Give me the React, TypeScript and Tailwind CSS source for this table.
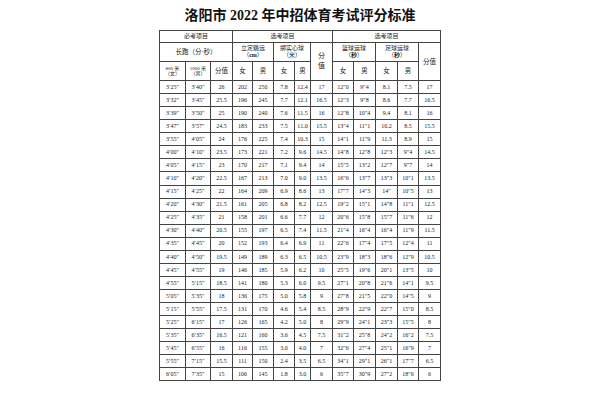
const widths = [26, 25, 22, 20, 21, 21, 16, 22, 21, 22, 22, 21, 22];

const rows: string[][] = [
  ["3′25″", "3′40″", "26", "202", "250", "7.8", "12.4", "17", "12″0", "9″4", "8.1", "7.5", "17"],
  ["3′32″", "3′45″", "25.5", "196", "245", "7.7", "12.1", "16.5", "12″3", "9″8", "8.6", "7.7", "16.5"],
  ["3′39″", "3′50″", "25", "190", "240", "7.6", "11.5", "16", "12″8", "10″4", "9.4", "8.1", "16"],
  ["3′47″", "3′57″", "24.5", "183", "233", "7.5", "11.0", "15.5", "13″4", "11″1", "10.2", "8.5", "15.5"],
  ["3′55″", "4′05″", "24", "176", "225", "7.4", "10.3", "15", "14″1", "11″9", "11.3", "8.9", "15"],
  ["4′00″", "4′10″", "23.5", "173", "221", "7.2", "9.6", "14.5", "14″8", "12″8", "12″3", "9″4", "14.5"],
  ["4′05″", "4′15″", "23", "170", "217", "7.1", "9.4", "14", "15″5", "13″2", "12″7", "9″7", "14"],
  ["4′10″", "4′20″", "22.5", "167", "213", "7.0", "9.0", "13.5", "16″6", "13″7", "13″3", "10″1", "13.5"],
  ["4′15″", "4′25″", "22", "164", "209", "6.9", "8.6", "13", "17″7", "14″3", "14″", "10″5", "13"],
  ["4′20″", "4′30″", "21.5", "161", "205", "6.8", "8.2", "12.5", "19″2", "15″1", "14″8", "11″1", "12.5"],
  ["4′25″", "4′35″", "21", "158", "201", "6.6", "7.7", "12", "20″6", "15″8", "15″7", "11″6", "12"],
  ["4′30″", "4′40″", "20.5", "155", "197", "6.5", "7.4", "11.5", "21″4", "16″4", "16″4", "11″9", "11.5"],
  ["4′35″", "4′45″", "20", "152", "193", "6.4", "6.9", "11", "22″6", "17″4", "17″5", "12″4", "11"],
  ["4′40″", "4′50″", "19.5", "149", "189", "6.3", "6.5", "10.5", "23″9", "18″3", "18″6", "12″9", "10.5"],
  ["4′45″", "4′55″", "19", "146", "185", "5.9", "6.2", "10", "25″5", "19″6", "20″1", "13″5", "10"],
  ["4′55″", "5′15″", "18.5", "141", "180", "5.3", "6.0", "9.5", "27″1", "20″8", "21″6", "14″1", "9.5"],
  ["5′05″", "5′35″", "18", "136", "175", "5.0", "5.8", "9", "27″8", "21″5", "22″0", "14″5", "9"],
  ["5′15″", "5′55″", "17.5", "131", "170", "4.6", "5.4", "8.5", "28″9", "22″9", "22″7", "15″0", "8.5"],
  ["5′25″", "6′15″", "17", "126", "165", "4.2", "5.0", "8", "29″9", "24″1", "23″3", "15″5", "8"],
  ["5′35″", "6′35″", "16.5", "121", "160", "3.6", "4.5", "7.5", "31″2", "25″8", "24″2", "16″2", "7.5"],
  ["5′45″", "6′55″", "16", "116", "155", "3.0", "4.0", "7", "32″6", "27″4", "25″1", "16″9", "7"],
  ["5′55″", "7′15″", "15.5", "111", "150", "2.4", "3.5", "6.5", "34″1", "29″1", "26″1", "17″7", "6.5"],
  ["6′05″", "7′35″", "15", "106", "145", "1.8", "3.0", "6", "35″7", "30″9", "27″2", "18″6", "6"],
];

const cell = "border border-[#444] text-center align-middle p-0 leading-[1.1]";

export default function App() {
  return (
    <div
      className="w-[600px] h-[400px] bg-white text-[#222] overflow-hidden"
      style={{ fontFamily: '"Liberation Serif", "Noto Sans CJK SC", serif' }}
    >
      <h1 className="pt-[8px] h-[30px] text-center text-[14px] font-bold leading-[16px] text-[#111]">
        洛阳市 2022 年中招体育考试评分标准
      </h1>
      <table className="mx-auto table-fixed border-collapse w-[281px] text-[6px]">
        <colgroup>
          {widths.map((w, i) => (
            <col key={i} style={{ width: w }} />
          ))}
        </colgroup>
        <thead>
          <tr className="h-[12px]">
            <th colSpan={3} className={`${cell} font-normal`}>必考项目</th>
            <th colSpan={5} className={`${cell} font-normal`}>选考项目</th>
            <th colSpan={5} className={`${cell} font-normal`}>选考项目</th>
          </tr>
          <tr className="h-[19px]">
            <th colSpan={3} className={`${cell} font-normal text-[6.5px]`}>长跑（分·秒）</th>
            <th colSpan={2} className={`${cell} font-normal`}>
              立定跳远
              <br />
              （<span className="font-bold">cm</span>）
            </th>
            <th colSpan={2} className={`${cell} font-normal`}>
              掷实心球
              <br />
              （米）
            </th>
            <th rowSpan={2} className={`${cell} font-normal text-[7px] leading-[1.4]`}>
              分
              <br />
              值
            </th>
            <th colSpan={2} className={`${cell} font-normal`}>
              篮球运球
              <br />
              （<span className="font-bold">秒</span>）
            </th>
            <th colSpan={2} className={`${cell} font-normal`}>
              足球运球
              <br />
              （<span className="font-bold">秒</span>）
            </th>
            <th rowSpan={2} className={`${cell} font-normal text-[6.5px]`}>分值</th>
          </tr>
          <tr className="h-[19px]">
            <th className={`${cell} font-normal text-[5px]`}>
              800 米
              <br />
              （女）
            </th>
            <th className={`${cell} font-normal text-[5px]`}>
              1000 米
              <br />
              （男）
            </th>
            <th className={`${cell} font-normal text-[6.5px]`}>分值</th>
            {["女", "男", "女", "男", "女", "男", "女", "男"].map((t, i) => (
              <th key={i} className={`${cell} font-normal text-[6.5px]`}>{t}</th>
            ))}
          </tr>
        </thead>
        <tbody>
          {rows.map((r, i) => (
            <tr key={i} className="h-[13.07px]">
              {r.map((v, j) => (
                <td key={j} className={cell}>{v}</td>
              ))}
            </tr>
          ))}
        </tbody>
      </table>
    </div>
  );
}
